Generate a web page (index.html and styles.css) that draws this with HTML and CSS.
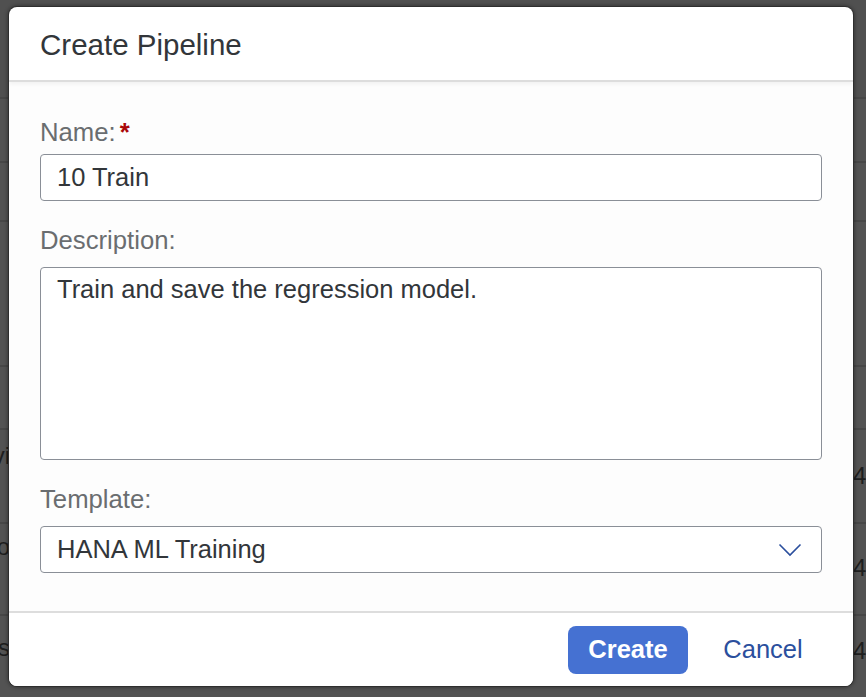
FILE: index.html
```html
<!DOCTYPE html>
<html lang="en">
<head>
  <meta charset="UTF-8">
  <meta name="viewport" content="width=device-width, initial-scale=1.0">
  <title>Create Pipeline</title>
  <link rel="stylesheet" href="styles.css">
</head>
<body>
  <!-- dimmed list page behind the dialog -->
  <div class="page">
    <div class="bg-row"></div>
    <div class="bg-row"></div>
    <div class="bg-row"></div>
    <div class="bg-row"></div>
    <div class="bg-row"></div>
    <div class="bg-row">
      <span class="cell-left"><span>Previ</span></span>
      <span class="cell-right"><span>4.2</span></span>
    </div>
    <div class="bg-row">
      <span class="cell-left"><span>Repo</span></span>
      <span class="cell-right"><span>4.2</span></span>
    </div>
    <div class="bg-row">
      <span class="cell-left"><span>Regis</span></span>
      <span class="cell-right"><span>4.2</span></span>
    </div>
  </div>

  <div class="dialog">
    <div class="dialog-header">
      <h1>Create Pipeline</h1>
    </div>

    <form class="dialog-content">
      <div class="form-group">
        <label for="pipeline-name">Name:<span class="required">*</span></label>
        <input type="text" id="pipeline-name" class="field" value="10 Train">
      </div>
      <div class="form-group">
        <label for="pipeline-desc">Description:</label>
        <textarea id="pipeline-desc" class="field area">Train and save the regression model.</textarea>
      </div>
      <div class="form-group">
        <label>Template:</label>
        <div class="field select">
          <span>HANA ML Training</span>
          <svg class="chevron" width="24" height="14" viewBox="0 0 24 14">
            <polyline points="1.5,1.5 12,12 22.5,1.5" fill="none" stroke="#2b4f9d" stroke-width="1.6"/>
          </svg>
        </div>
      </div>
    </form>

    <div class="dialog-footer">
      <button type="button" class="btn btn-primary">Create</button>
      <button type="button" class="btn btn-plain">Cancel</button>
    </div>
  </div>
</body>
</html>
```

FILE: styles.css
```css
/* General Styles */
body {
  margin: 0;
  font-family: "Liberation Sans", Arial, sans-serif;
  background-color: #535353;
  color: #32363a;
}

.page {
  display: flex;
  flex-direction: column;
  height: 697px;
  overflow: hidden;
}

.bg-row {
  display: flex;
  justify-content: space-between;
  align-items: flex-start;
  box-sizing: border-box;
  border-bottom: 2px solid #474747;
  font-size: 24px;
  line-height: 28px;
  color: #1e1e1e;
}

.bg-row:nth-child(1) { height: 99px; background-color: #505050; }
.bg-row:nth-child(2) { height: 64px; }
.bg-row:nth-child(3) { height: 59px; }
.bg-row:nth-child(4) { height: 145px; }
.bg-row:nth-child(5) { height: 63px; }
.bg-row:nth-child(6) { height: 94px; }
.bg-row:nth-child(7) { height: 92px; }
.bg-row:nth-child(8) { flex: 1; border-bottom: none; }

.cell-left {
  display: flex;
  justify-content: flex-end;
  width: 10px;
  overflow: hidden;
  white-space: nowrap;
}

.cell-right {
  width: 13px;
  overflow: hidden;
  white-space: nowrap;
}

.bg-row:nth-child(6) .cell-left { padding-top: 12px; }
.bg-row:nth-child(6) .cell-right { padding-top: 32px; }
.bg-row:nth-child(7) .cell-left { padding-top: 9px; }
.bg-row:nth-child(7) .cell-right { padding-top: 30px; }
.bg-row:nth-child(8) .cell-left { padding-top: 18px; }
.bg-row:nth-child(8) .cell-right { padding-top: 21px; }

/* Dialog */
.dialog {
  position: absolute;
  left: 9px;
  top: 7px;
  width: 844px;
  height: 679px;
  display: flex;
  flex-direction: column;
  background: #fff;
  border-radius: 8px;
  box-shadow: 0 0 0 1px #2e2e2e, 0 0 4px 1px rgba(0, 0, 0, 0.45);
  overflow: hidden;
}

.dialog-header {
  position: relative;
  z-index: 1;
  display: flex;
  align-items: center;
  box-sizing: border-box;
  height: 75px;
  padding: 2px 31px 0;
  border-bottom: 2px solid #dddddd;
  box-shadow: 0 2px 4px rgba(0, 0, 0, 0.05);
}

h1 {
  margin: 0;
  font-size: 29.5px;
  font-weight: normal;
  color: #32363a;
}

.dialog-content {
  flex: 1;
  margin: 0;
  padding: 35px 31px 0;
  background: #fdfdfd;
}

.form-group {
  margin-bottom: 24px;
}

label {
  display: block;
  margin-bottom: 12px;
  font-size: 25.7px;
  line-height: 30px;
  color: #6a6d70;
}

.form-group:first-child label {
  margin-bottom: 7px;
}

.required {
  margin-left: 4px;
  color: #aa0808;
  font-weight: bold;
}

.field {
  display: block;
  box-sizing: border-box;
  width: 100%;
  height: 47px;
  margin: 0;
  padding: 0 16px;
  border: 1px solid #8a8f97;
  border-radius: 4px;
  background: #fff;
  font-family: inherit;
  font-size: 25.5px;
  color: #32363a;
  outline: none;
}

.area {
  height: 193px;
  padding: 6px 16px;
  line-height: 30px;
  resize: none;
}

.select {
  display: flex;
  align-items: center;
  justify-content: space-between;
  padding-right: 19px;
}

.chevron {
  display: block;
}

/* Footer */
.dialog-footer {
  display: flex;
  align-items: center;
  justify-content: flex-end;
  gap: 15px;
  box-sizing: border-box;
  height: 75px;
  padding: 0 30px 0 0;
  border-top: 2px solid #dddddd;
  background: #fff;
}

.btn {
  height: 48px;
  padding: 0 20px;
  border: none;
  border-radius: 8px;
  font-family: inherit;
  font-size: 25.5px;
  cursor: pointer;
}

.btn-primary {
  min-width: 120px;
  background-color: #4571d2;
  color: #fff;
  font-weight: bold;
}

.btn-plain {
  min-width: 120px;
  background: transparent;
  color: #2b4f9d;
}
```
